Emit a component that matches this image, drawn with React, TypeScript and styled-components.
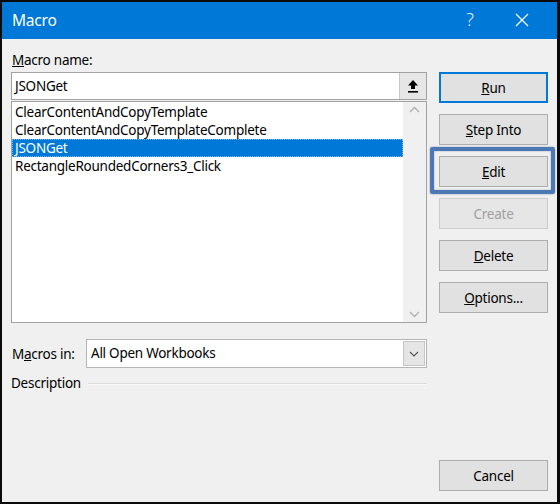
import React from "react";
import styled, { createGlobalStyle } from "styled-components";

const Global = createGlobalStyle`
  html, body { margin: 0; padding: 0; background: #000; }
  body { font-family: "Noto Sans", "Open Sans", sans-serif; }
  * { box-sizing: border-box; }
`;

const Window = styled.div`
  width: 560px;
  height: 504px;
  border-style: solid;
  border-color: #0a0a0a;
  border-width: 2px 3px 2px 2px;
  display: flex;
  flex-direction: column;
  background: #f0f0f0;
  overflow: hidden;
`;

const TitleBar = styled.div`
  height: 37px;
  flex: none;
  background: #0078d7;
  color: #fff;
  display: flex;
  align-items: center;
  padding-left: 10px;
  font-size: 15.5px;
  letter-spacing: -0.2px;
`;

const Title = styled.div`
  flex: 1;
  margin-top: -2px;
`;

const TitleHelp = styled.div`
  width: 46px;
  text-align: center;
  font-size: 18px;
  font-weight: 300;
  margin-top: -3px;
  color: #e8f1fb;
`;

const TitleClose = styled.div`
  width: 58px;
  margin-right: 6px;
  display: flex;
  justify-content: center;
  align-items: center;
  margin-top: -2px;
`;

const Body = styled.div`
  flex: 1;
  display: flex;
  gap: 12px;
  padding: 12px 9px 11px 9px;
  font-size: 13.5px;
  letter-spacing: -0.25px;
  color: #000;
`;

const LeftCol = styled.div`
  width: 416px;
  display: flex;
  flex-direction: column;
`;

const RightCol = styled.div`
  width: 109px;
  display: flex;
  flex-direction: column;
  padding-top: 21px;
  gap: 11px;
`;

const Label = styled.div`
  height: 18px;
  line-height: 18px;
  padding-left: 1px;
`;

const InputBox = styled.div`
  margin-top: 3px;
  height: 28px;
  border: 1px solid #a2a2a2;
  background: #fff;
  display: flex;
  align-items: stretch;
`;

const InputText = styled.div`
  flex: 1;
  padding-left: 3px;
  line-height: 26px;
`;

const CollapseBtn = styled.div`
  width: 27px;
  background: #e6e6e6;
  border-left: 1px solid #c9c9c9;
  display: flex;
  align-items: center;
  justify-content: center;
`;

const ListBox = styled.div`
  margin-top: 1px;
  height: 222px;
  border: 1px solid #a2a2a2;
  background: #fff;
  display: flex;
`;

const ListItems = styled.div`
  flex: 1;
  padding-top: 1px;
`;

const ListItem = styled.div<{ $selected?: boolean }>`
  height: 18px;
  line-height: 18px;
  padding-left: 3px;
  background: ${(p) => (p.$selected ? "#0078d7" : "transparent")};
  color: ${(p) => (p.$selected ? "#fff" : "#000")};
  outline: ${(p) => (p.$selected ? "1px dotted #7fb6ea" : "none")};
  outline-offset: -1px;
`;

const ScrollBar = styled.div`
  width: 23px;
  background: #f0f0f0;
  display: flex;
  flex-direction: column;
  justify-content: space-between;
  align-items: center;
  padding: 4px 0 4px;
`;

const ComboRow = styled.div`
  margin-top: 16px;
  display: flex;
  align-items: center;
`;

const ComboLabel = styled.div`
  width: 75px;
  padding-left: 1px;
`;

const Combo = styled.div`
  flex: 1;
  height: 29px;
  border: 1px solid #b5b5b5;
  background: #fff;
  display: flex;
  padding: 1px;
`;

const ComboText = styled.div`
  flex: 1;
  padding-left: 3px;
  line-height: 25px;
`;

const ComboBtn = styled.div`
  width: 22px;
  background: #e5e5e5;
  border: 1px solid #c6c6c6;
  display: flex;
  align-items: center;
  justify-content: center;
`;

const DescRow = styled.div`
  margin-top: 5px;
  display: flex;
  align-items: center;
  gap: 7px;
  height: 20px;
`;

const DescLine = styled.div`
  flex: 1;
  height: 2px;
  border-top: 1px solid #dcdcdc;
  border-bottom: 1px solid #fafafa;
  margin-top: 1px;
`;

const Button = styled.div<{ $default?: boolean; $disabled?: boolean; $focus?: boolean }>`
  position: relative;
  height: 31px;
  flex: none;
  border: 1px solid;
  box-shadow: ${(p) => (p.$default ? "inset 0 0 0 1px #0078d7" : "none")};
  display: flex;
  align-items: center;
  justify-content: center;
  color: ${(p) => (p.$disabled ? "#a0a0a0" : "#000")};
  border-color: ${(p) => (p.$disabled ? "#cccccc" : p.$default ? "#0078d7" : "#adadad")};
  background: ${(p) => (p.$disabled ? "#e6e6e6" : "#e1e1e1")};

  ${(p) =>
    p.$focus &&
    `
    &::before {
      content: "";
      position: absolute;
      top: -10px;
      left: -10px;
      right: -8px;
      bottom: -8px;
      border: 4px solid #4c78b3;
      border-radius: 2px;
      box-shadow: 0 0 2px rgba(40, 70, 120, 0.5), inset 0 0 2px rgba(40, 70, 120, 0.4);
    }
  `}
`;

const Spacer = styled.div`
  flex: 1;
`;

const Chevron = ({ dir }: { dir: "up" | "down" }) => (
  <svg width="11" height="7" viewBox="0 0 11 7">
    <path
      d={dir === "up" ? "M1 6 L5.5 1.5 L10 6" : "M1 1 L5.5 5.5 L10 1"}
      fill="none"
      stroke="#b0b0b0"
      strokeWidth="1.3"
    />
  </svg>
);

export default function App() {
  return (
    <>
      <Global />
      <Window>
        <TitleBar>
          <Title>Macro</Title>
          <TitleHelp>?</TitleHelp>
          <TitleClose>
            <svg width="14" height="14" viewBox="0 0 14 14">
              <path d="M1 1 L13 13 M13 1 L1 13" stroke="#fff" strokeWidth="1.2" />
            </svg>
          </TitleClose>
        </TitleBar>
        <Body>
          <LeftCol>
            <Label>
              <u>M</u>acro name:
            </Label>
            <InputBox>
              <InputText>JSONGet</InputText>
              <CollapseBtn>
                <svg width="12" height="14" viewBox="0 0 12 14">
                  <path d="M6 1 L11 6.5 L8 6.5 L8 10 L4 10 L4 6.5 L1 6.5 Z" fill="#000" />
                  <rect x="1" y="12" width="10" height="1.6" fill="#000" />
                </svg>
              </CollapseBtn>
            </InputBox>
            <ListBox>
              <ListItems>
                <ListItem>ClearContentAndCopyTemplate</ListItem>
                <ListItem>ClearContentAndCopyTemplateComplete</ListItem>
                <ListItem $selected>JSONGet</ListItem>
                <ListItem>RectangleRoundedCorners3_Click</ListItem>
              </ListItems>
              <ScrollBar>
                <Chevron dir="up" />
                <Chevron dir="down" />
              </ScrollBar>
            </ListBox>
            <ComboRow>
              <ComboLabel>
                M<u>a</u>cros in:
              </ComboLabel>
              <Combo>
                <ComboText>All Open Workbooks</ComboText>
                <ComboBtn>
                  <svg width="10" height="6" viewBox="0 0 10 6">
                    <path d="M1 1 L5 5 L9 1" fill="none" stroke="#555" strokeWidth="1.1" />
                  </svg>
                </ComboBtn>
              </Combo>
            </ComboRow>
            <DescRow>
              <span>Description</span>
              <DescLine />
            </DescRow>
          </LeftCol>
          <RightCol>
            <Button $default>
              <span>
                <u>R</u>un
              </span>
            </Button>
            <Button>
              <span>
                <u>S</u>tep Into
              </span>
            </Button>
            <Button $focus>
              <span>
                <u>E</u>dit
              </span>
            </Button>
            <Button $disabled>Create</Button>
            <Button>
              <span>
                <u>D</u>elete
              </span>
            </Button>
            <Button>
              <span>
                <u>O</u>ptions...
              </span>
            </Button>
            <Spacer />
            <Button>Cancel</Button>
          </RightCol>
        </Body>
      </Window>
    </>
  );
}
